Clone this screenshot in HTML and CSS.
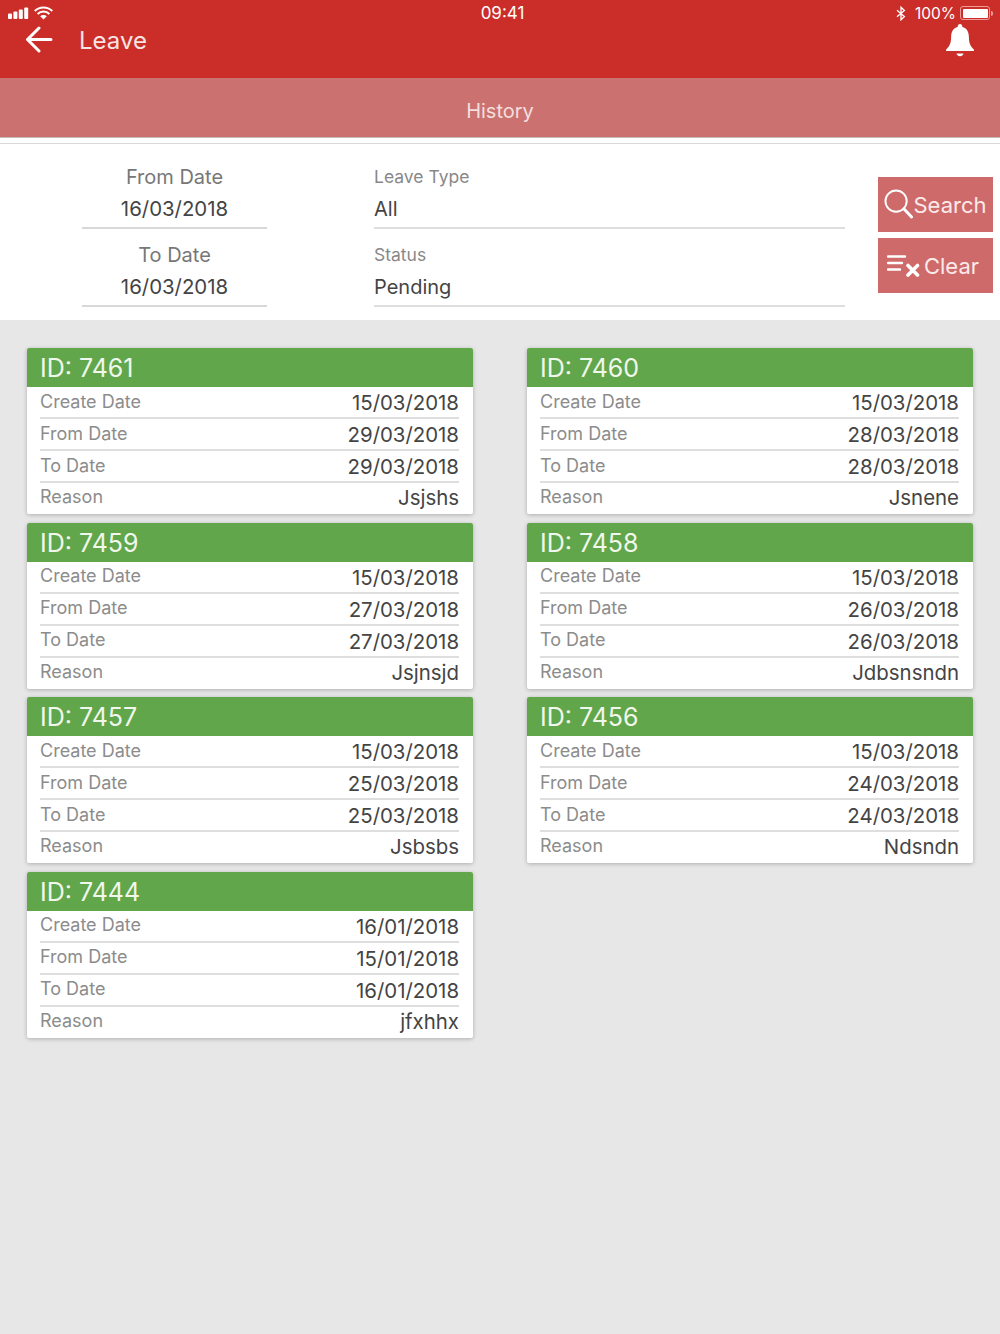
FILE: index.html
```html
<!DOCTYPE html>
<html lang="en">
<head>
<meta charset="UTF-8" />
<title>Leave - History</title>
<link rel="stylesheet" href="styles.css">
</head>
<body>

<header class="app-header">
  <div class="status-bar">
    <div class="status-left">
      <svg width="46" height="16" viewBox="0 0 46 16" fill="#fff">
        <rect x="0" y="8.500" width="4" height="5.500" rx="1"/>
        <rect x="5.400" y="6.500" width="4" height="7.500" rx="1"/>
        <rect x="10.800" y="4.500" width="4" height="9.500" rx="1"/>
        <rect x="16.200" y="2.500" width="4" height="11.500" rx="1"/>
        <path d="M26.700 6a12.600 12.600 0 0 1 17.600 0" fill="none" stroke="#fff" stroke-width="2"/>
        <path d="M29.600 9a8.500 8.500 0 0 1 11.800 0" fill="none" stroke="#fff" stroke-width="2"/>
        <path d="M32.200 11.300a4.700 4.700 0 0 1 6.600 0L35.500 14.500z"/>
      </svg>
    </div>
    <div class="status-time">09:41</div>
    <div class="status-right">
      <svg width="10" height="15" viewBox="0 0 10 15" fill="none" stroke="#fff" stroke-width="1.300">
        <path d="M1 4.200l7.400 6.300L5 13.800V1.200l3.400 3.300L1 10.800"/>
      </svg>
      <span class="battery-pct">100%</span>
      <span class="battery"><span class="battery-fill"></span></span>
      <span class="battery-tip"></span>
    </div>
  </div>
  <div class="nav-bar">
    <svg class="back-icon" width="28" height="27" viewBox="0 0 28 27" fill="none" stroke="#fff" stroke-width="3" stroke-linecap="round" stroke-linejoin="round">
      <path d="M14 2L2.500 13.500 14 25M3 13.500h23"/>
    </svg>
    <div class="nav-title">Leave</div>
    <svg class="bell-icon" width="30" height="34" viewBox="0 0 30 34" fill="#fff">
      <path d="M15 1c1.400 0 2.300 1 2.300 2.400v.5c4.600 1.100 6.600 5 6.600 10 0 6 1.500 9.300 5 12.600v1.500H1.100V26.500c3.500-3.300 5-6.600 5-12.600 0-5 2-8.900 6.600-10v-.5C12.700 2 13.600 1 15 1z"/>
      <path d="M11.500 30.500h7c-.4 1.700-1.800 2.700-3.500 2.700s-3.100-1-3.500-2.700z"/>
    </svg>
  </div>
</header>

<div class="sub-header">History</div>
<div class="sub-gap"></div>

<section class="filters">
  <div class="date-col">
    <div class="date-field">
      <div class="date-label">From Date</div>
      <div class="date-value">16/03/2018</div>
    </div>
    <div class="date-field">
      <div class="date-label">To Date</div>
      <div class="date-value">16/03/2018</div>
    </div>
  </div>
  <div class="select-col">
    <div class="select-field">
      <div class="select-label">Leave Type</div>
      <div class="select-value">All</div>
    </div>
    <div class="select-field">
      <div class="select-label">Status</div>
      <div class="select-value">Pending</div>
    </div>
  </div>
  <div class="button-col">
    <div class="btn btn-search">
      <svg width="29" height="31" viewBox="0 0 30 32" fill="none" stroke="#fff" stroke-width="2">
        <circle cx="12.500" cy="12.500" r="11"/>
        <path d="M20.500 20.500L28.500 29" stroke-width="3" stroke-linecap="round"/>
      </svg>
      <span>Search</span>
    </div>
    <div class="btn btn-clear">
      <svg width="33" height="24" viewBox="0 0 33 24" fill="none" stroke="#fff" stroke-linecap="round">
        <path d="M1 2.500h17M1 9h14M1 15.500h12" stroke-width="2.400"/>
        <path d="M21 11.500l9.500 9.500M30.500 11.500L21 21" stroke-width="3.600"/>
      </svg>
      <span>Clear</span>
    </div>
  </div>
</section>

<main class="cards">

  <div class="card">
    <div class="card-head">ID: 7461</div>
    <div class="row"><span class="row-label">Create Date</span><span class="row-value">15/03/2018</span></div>
    <div class="row"><span class="row-label">From Date</span><span class="row-value">29/03/2018</span></div>
    <div class="row"><span class="row-label">To Date</span><span class="row-value">29/03/2018</span></div>
    <div class="row"><span class="row-label">Reason</span><span class="row-value">Jsjshs</span></div>
  </div>

  <div class="card">
    <div class="card-head">ID: 7460</div>
    <div class="row"><span class="row-label">Create Date</span><span class="row-value">15/03/2018</span></div>
    <div class="row"><span class="row-label">From Date</span><span class="row-value">28/03/2018</span></div>
    <div class="row"><span class="row-label">To Date</span><span class="row-value">28/03/2018</span></div>
    <div class="row"><span class="row-label">Reason</span><span class="row-value">Jsnene</span></div>
  </div>

  <div class="card">
    <div class="card-head">ID: 7459</div>
    <div class="row"><span class="row-label">Create Date</span><span class="row-value">15/03/2018</span></div>
    <div class="row"><span class="row-label">From Date</span><span class="row-value">27/03/2018</span></div>
    <div class="row"><span class="row-label">To Date</span><span class="row-value">27/03/2018</span></div>
    <div class="row"><span class="row-label">Reason</span><span class="row-value">Jsjnsjd</span></div>
  </div>

  <div class="card">
    <div class="card-head">ID: 7458</div>
    <div class="row"><span class="row-label">Create Date</span><span class="row-value">15/03/2018</span></div>
    <div class="row"><span class="row-label">From Date</span><span class="row-value">26/03/2018</span></div>
    <div class="row"><span class="row-label">To Date</span><span class="row-value">26/03/2018</span></div>
    <div class="row"><span class="row-label">Reason</span><span class="row-value">Jdbsnsndn</span></div>
  </div>

  <div class="card">
    <div class="card-head">ID: 7457</div>
    <div class="row"><span class="row-label">Create Date</span><span class="row-value">15/03/2018</span></div>
    <div class="row"><span class="row-label">From Date</span><span class="row-value">25/03/2018</span></div>
    <div class="row"><span class="row-label">To Date</span><span class="row-value">25/03/2018</span></div>
    <div class="row"><span class="row-label">Reason</span><span class="row-value">Jsbsbs</span></div>
  </div>

  <div class="card">
    <div class="card-head">ID: 7456</div>
    <div class="row"><span class="row-label">Create Date</span><span class="row-value">15/03/2018</span></div>
    <div class="row"><span class="row-label">From Date</span><span class="row-value">24/03/2018</span></div>
    <div class="row"><span class="row-label">To Date</span><span class="row-value">24/03/2018</span></div>
    <div class="row"><span class="row-label">Reason</span><span class="row-value">Ndsndn</span></div>
  </div>

  <div class="card">
    <div class="card-head">ID: 7444</div>
    <div class="row"><span class="row-label">Create Date</span><span class="row-value">16/01/2018</span></div>
    <div class="row"><span class="row-label">From Date</span><span class="row-value">15/01/2018</span></div>
    <div class="row"><span class="row-label">To Date</span><span class="row-value">16/01/2018</span></div>
    <div class="row"><span class="row-label">Reason</span><span class="row-value">jfxhhx</span></div>
  </div>

</main>

</body>
</html>
```

FILE: styles.css
```css
html, body {
  margin: 0;
  height: 1334px;
  overflow: hidden;
}
body {
  font-family: Inter, "Liberation Sans", sans-serif;
  background: #e7e7e7;
  color: #333;
}

/* Top bar */
.app-header {
  background: #cb2d28;
  height: 78px;
  color: #fff;
}
.status-bar {
  display: grid;
  grid-template-columns: 1fr auto 1fr;
  align-items: center;
  height: 24px;
  padding: 2px 7px 0 8px;
  box-sizing: border-box;
  font-size: 17px;
}
.status-left svg {
  display: block;
}
.status-time {
  margin-left: 4px;
}
.status-right {
  display: flex;
  align-items: center;
  justify-content: flex-end;
}
.battery-pct {
  margin-left: 9px;
  font-size: 15.500px;
}
.battery {
  margin-left: 4px;
  width: 30px;
  height: 14px;
  padding: 1.500px;
  box-sizing: border-box;
  border: 1px solid #ec9c98;
  border-radius: 3px;
}
.battery-fill {
  display: block;
  height: 100%;
  background: #fff;
  border-radius: 1px;
}
.battery-tip {
  width: 2px;
  height: 5px;
  margin-left: 1px;
  background: #ec9c98;
  border-radius: 0 2px 2px 0;
}
.nav-bar {
  display: flex;
  align-items: center;
  height: 30px;
  padding: 0 25px 0 25px;
}
.back-icon {
  flex: none;
}
.nav-title {
  margin-left: 26px;
  padding-top: 3px;
  font-size: 24px;
  color: #f8e4e3;
  flex: 1;
}
.bell-icon {
  flex: none;
  margin-top: 2px;
}

.sub-header {
  background: #cb7270;
  height: 59px;
  line-height: 66px;
  text-align: center;
  color: #f4dede;
  font-size: 20px;
  border-bottom: 1px solid #c4bcbc;
}
.sub-gap {
  height: 5px;
  background: #fff;
  border-bottom: 1px solid #d9d9d9;
}

/* Filters */
.filters {
  display: flex;
  background: #fff;
  height: 176px;
  box-sizing: border-box;
  padding-top: 17px;
}
.date-col {
  width: 185px;
  margin-left: 82px;
  flex: none;
}
.date-field {
  height: 66px;
  margin-bottom: 10px;
  border-bottom: 2px solid #d8d8d8;
  text-align: center;
}
.date-label {
  font-size: 20px;
  line-height: 32px;
  color: #777;
}
.date-value {
  font-size: 20.400px;
  line-height: 32px;
  color: #444;
}
.select-col {
  width: 471px;
  margin-left: 107px;
  flex: none;
}
.select-field {
  height: 66px;
  margin-bottom: 10px;
  border-bottom: 2px solid #dedede;
}
.select-label {
  font-size: 17.500px;
  line-height: 32px;
  color: #888;
}
.select-value {
  font-size: 20px;
  line-height: 32px;
  color: #444;
}
.button-col {
  margin-left: 33px;
  width: 115px;
  flex: none;
  padding-top: 16px;
}
.btn {
  display: flex;
  align-items: center;
  justify-content: center;
  height: 55px;
  background: #cf6a6a;
  color: #fbeaea;
  font-size: 22px;
  margin-bottom: 6px;
}
.btn-clear {
  gap: 4px;
  padding-right: 5px;
  box-sizing: border-box;
}

/* Cards */
.cards {
  display: grid;
  grid-template-columns: 446px 446px;
  column-gap: 54px;
  row-gap: 8.500px;
  padding: 28px 27px 0;
}
.card {
  background: #fff;
  border-radius: 2px;
  box-shadow: 0 1px 4px rgba(0,0,0,0.25);
  overflow: hidden;
}
.card-head {
  background: #62a64b;
  color: #f0f7ec;
  height: 39px;
  line-height: 40px;
  padding-left: 13px;
  font-size: 25px;
}
.row {
  display: flex;
  justify-content: space-between;
  align-items: center;
  height: 32px;
  margin: 0 14px 0 13px;
  box-sizing: border-box;
  border-bottom: 2px solid #dedede;
}
.row:last-child {
  height: 31px;
  border-bottom: none;
}
.row-label {
  font-size: 18px;
  color: #8c8c8c;
  padding-bottom: 2px;
}
.row-value {
  font-size: 20.400px;
  color: #444;
  padding-top: 1px;
}
.row:last-child .row-label {
  padding-bottom: 4px;
}
.row:last-child .row-value {
  padding-top: 0;
  padding-bottom: 2px;
}
```
